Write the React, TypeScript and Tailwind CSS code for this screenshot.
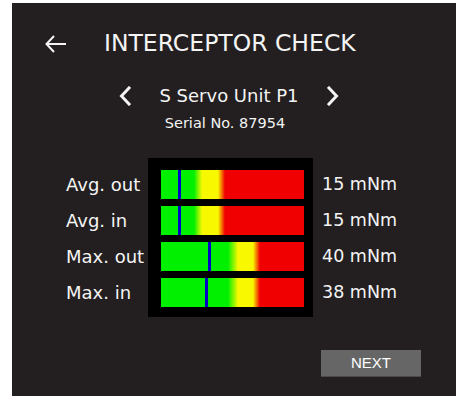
const font = "font-['DejaVu_Sans',Verdana,sans-serif]"

type Reading = { label: string, value: string, marker: number, wide?: boolean }

const readings: Reading[] = [
    { label: "Avg. out", value: "15 mNm", marker: 17 },
    { label: "Avg. in", value: "15 mNm", marker: 17 },
    { label: "Max. out", value: "40 mNm", marker: 47, wide: true },
    { label: "Max. in", value: "38 mNm", marker: 44, wide: true },
]

export default function App() {
    return <div className="w-[462px] h-[405px] bg-white pt-[3px] pl-[12px]">
        <div className={`w-[444px] h-[393px] bg-[#231f20] flex flex-col text-[#f4f4f4] ${font}`}>

            <div className="mt-[29px] h-[24px] flex items-center">
                <svg className="ml-[33px]" width="22" height="18" viewBox="0 0 22 18" fill="none" stroke="#f4f4f4" strokeWidth="2">
                    <path d="M1 9 H21" />
                    <path d="M9 1 L1.5 9 L9 17" />
                </svg>
                <span className="ml-[37px] text-[23.5px] leading-none">INTERCEPTOR CHECK</span>
            </div>

            <div className="mt-[30px] h-[20px] flex items-center justify-center pr-[10px]">
                <Chevron dir="left" />
                <span className="mx-[28px] text-[18px] leading-none">S Servo Unit P1</span>
                <Chevron dir="right" />
            </div>

            <div className="mt-[10px] h-[15px] flex items-center justify-center pr-[18px] text-[14.5px] leading-none">
                Serial No. 87954
            </div>

            <div className="mt-[27px] flex">
                <div className="w-[131px] shrink-0 pl-[54px] pt-[12px] flex flex-col gap-[7px] items-start">
                    {readings.map(r =>
                        <div key={r.label} className="h-[29px] flex items-center whitespace-nowrap text-[18px] leading-none">{r.label}</div>
                    )}
                </div>
                <div className="ml-[5px] w-[165px] h-[159px] bg-black pl-[13px] pt-[12px] flex flex-col gap-[7px]">
                    {readings.map(r => <Bar key={r.label} reading={r} />)}
                </div>
                <div className="ml-[9px] pt-[12px] flex flex-col gap-[7px]">
                    {readings.map(r =>
                        <div key={r.label} className="h-[29px] flex items-center whitespace-nowrap text-[17.5px] leading-none">{r.value}</div>
                    )}
                </div>
            </div>

            <button className="mt-[33px] ml-[309px] w-[100px] h-[27px] bg-[#666666] border-b border-[#4a4a4a] text-white text-[15px] font-['Liberation_Sans',Arial,sans-serif] flex items-center justify-center">
                NEXT
            </button>
        </div>
    </div>
}

const Chevron = ({ dir }: { dir: "left" | "right" }) => {
    return <svg width="12" height="20" viewBox="0 0 12 20" fill="none" stroke="#f4f4f4" strokeWidth="3" strokeLinecap="square">
        {
            dir === "left"
                ? <path d="M10 2 L2.5 10 L10 18" />
                : <path d="M2 2 L9.5 10 L2 18" />
        }
    </svg>
}

const Bar = ({ reading: r }: { reading: Reading }) => {
    return <div className={`relative w-[143px] h-[29px] ${r.wide
        ? "bg-[linear-gradient(to_right,#00f000_67px,#f8f800_77px,#f8f800_92px,#f00000_99px)]"
        : "bg-[linear-gradient(to_right,#00f000_33px,#f8f800_41px,#f8f800_57px,#f00000_64px)]"}`}>
        <span className="absolute top-0 bottom-0 w-[3px] bg-[#0000c8]" style={{ left: `${r.marker}px` }}></span>
    </div>
}
